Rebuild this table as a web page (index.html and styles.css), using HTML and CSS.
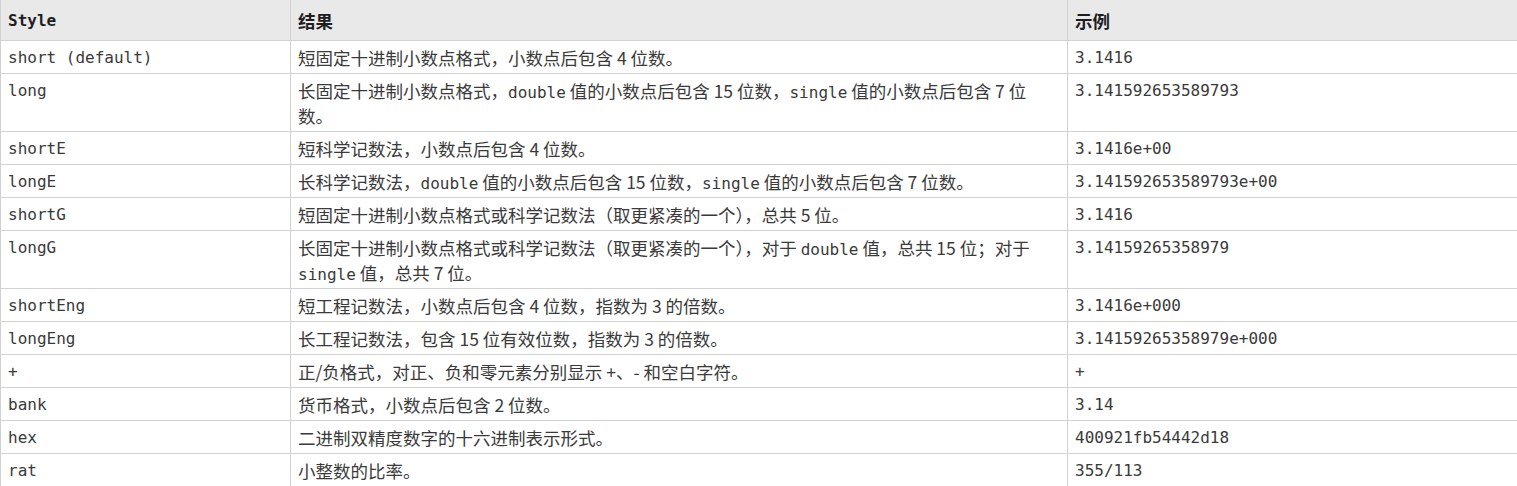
FILE: index.html
```html
<!DOCTYPE html>
<html lang="zh-CN">
<head>
<meta charset="utf-8">
<title>format styles</title>
<link rel="stylesheet" href="styles.css">
</head>
<body>
<table class="fmt">
  <colgroup>
    <col class="c1">
    <col class="c2">
    <col class="c3">
  </colgroup>
  <thead>
    <tr><th class="mono">Style</th><th>结果</th><th>示例</th></tr>
  </thead>
  <tbody>
    <tr><td class="mono">short (default)</td><td>短固定十进制小数点格式，小数点后包含 4 位数。</td><td class="mono">3.1416</td></tr>
    <tr><td class="mono">long</td><td>长固定十进制小数点格式，<code>double</code> 值的小数点后包含 15 位数，<code>single</code> 值的小数点后包含 7 位数。</td><td class="mono">3.141592653589793</td></tr>
    <tr><td class="mono">shortE</td><td>短科学记数法，小数点后包含 4 位数。</td><td class="mono">3.1416e+00</td></tr>
    <tr><td class="mono">longE</td><td>长科学记数法，<code>double</code> 值的小数点后包含 15 位数，<code>single</code> 值的小数点后包含 7 位数。</td><td class="mono">3.141592653589793e+00</td></tr>
    <tr><td class="mono">shortG</td><td>短固定十进制小数点格式或科学记数法（取更紧凑的一个），总共 5 位。</td><td class="mono">3.1416</td></tr>
    <tr><td class="mono">longG</td><td>长固定十进制小数点格式或科学记数法（取更紧凑的一个），对于 <code>double</code> 值，总共 15 位；对于 <code>single</code> 值，总共 7 位。</td><td class="mono">3.14159265358979</td></tr>
    <tr><td class="mono">shortEng</td><td>短工程记数法，小数点后包含 4 位数，指数为 3 的倍数。</td><td class="mono">3.1416e+000</td></tr>
    <tr><td class="mono">longEng</td><td>长工程记数法，包含 15 位有效位数，指数为 3 的倍数。</td><td class="mono">3.14159265358979e+000</td></tr>
    <tr><td class="mono">+</td><td>正/负格式，对正、负和零元素分别显示 +、- 和空白字符。</td><td class="mono">+</td></tr>
    <tr><td class="mono">bank</td><td>货币格式，小数点后包含 2 位数。</td><td class="mono">3.14</td></tr>
    <tr><td class="mono">hex</td><td>二进制双精度数字的十六进制表示形式。</td><td class="mono">400921fb54442d18</td></tr>
    <tr><td class="mono">rat</td><td>小整数的比率。</td><td class="mono">355/113</td></tr>
  </tbody>
</table>
</body>
</html>
```
FILE: styles.css
```css
html, body {
  margin: 0;
  padding: 0;
  background: #ffffff;
  overflow: hidden;
}
body {
  font-family: "Noto Sans CJK SC", "Noto Sans", sans-serif;
  font-size: 17.5px;
  color: #3a3a3a;
}
.fmt {
  border-collapse: collapse;
  table-layout: fixed;
  width: 1519px;
}
.c1 { width: 290px; }
.c2 { width: 777px; }
.fmt th,
.fmt td {
  border: 1px solid #d2d2d2;
  text-align: left;
  vertical-align: top;
  line-height: 25px;
  height: 25px;
  padding: 4px 7px 3px 7px;
}
.fmt th {
  background: #e9e9e9;
  color: #1e1e1e;
  font-weight: bold;
  padding: 8px 7px 7px 7px;
}
.fmt thead tr th {
  border-top: none;
}
.mono {
  font-family: "DejaVu Sans Mono", "Liberation Mono", "Noto Sans CJK SC", monospace;
  font-size: 16px;
}
code {
  font-family: "DejaVu Sans Mono", "Liberation Mono", monospace;
  font-size: 16px;
  line-height: 1;
}
```
